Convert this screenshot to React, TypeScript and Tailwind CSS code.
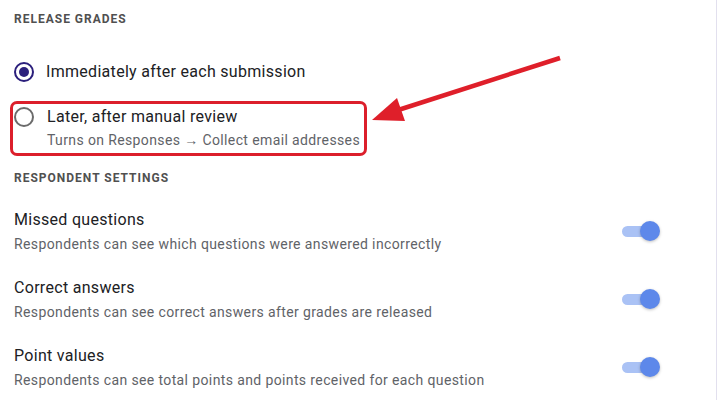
import React from 'react';

// Toggle switch (on state)
const Toggle = () => (
  <div className="relative h-[20px] w-[38px] shrink-0 blur-[0.4px]">
    <div className="absolute left-0 top-[5px] h-[11px] w-[32px] rounded-full bg-[#aac2f5]" />
    <div className="absolute right-0 top-0 h-[20px] w-[20px] rounded-full bg-[#5d88ea] shadow-[0_1px_3px_rgba(0,0,0,0.25)]" />
  </div>
);

const Radio = ({ checked }: { checked?: boolean }) =>
  checked ? (
    <div className="flex h-[20px] w-[20px] shrink-0 items-center justify-center rounded-full border-2 border-[#2b1f7c]">
      <div className="h-[10px] w-[10px] rounded-full bg-[#2b1f7c]" />
    </div>
  ) : (
    <div className="h-[20px] w-[20px] shrink-0 rounded-full border-2 border-[#6b6b6b]" />
  );

const SectionTitle = ({ children }: { children: React.ReactNode }) => (
  <h3 className="text-[12px] leading-[16px] font-bold tracking-[1px] text-[#505050]">{children}</h3>
);

const settings = [
  { title: 'Missed questions', desc: 'Respondents can see which questions were answered incorrectly' },
  { title: 'Correct answers', desc: 'Respondents can see correct answers after grades are released' },
  { title: 'Point values', desc: 'Respondents can see total points and points received for each question' },
];

export default function App() {
  return (
    <div className="relative h-[400px] w-[720px] overflow-hidden bg-white font-['Roboto',sans-serif]">
      <div className="h-full w-[717px] border-r border-[#e2e0ee] pl-[14px] pt-[11px]">
        <SectionTitle>RELEASE GRADES</SectionTitle>

        <div className="mt-[33px] flex h-[24px] items-center gap-[12px]">
          <Radio checked />
          <span className="text-[16px] leading-[24px] tracking-[0.3px] text-[#202124]">
            Immediately after each submission
          </span>
        </div>

        <div className="-ml-[4px] mt-[17px] w-[357px] rounded-[7px] border-[3px] border-[#dc1f2b] pb-[3px] pl-[1px] pt-[1px]">
          <div className="flex h-[24px] items-center gap-[13px]">
            <Radio />
            <span className="text-[16px] leading-[24px] tracking-[0.3px] text-[#202124]">Later, after manual review</span>
          </div>
          <p className="ml-[33px] mt-[1px] text-[14px] leading-[20px] tracking-[0.38px] text-[#5f6368]">
            Turns on Responses → Collect email addresses
          </p>
        </div>

        <div className="mt-[14px]">
          <SectionTitle>RESPONDENT SETTINGS</SectionTitle>
        </div>

        <div className="mt-[22px] flex flex-col gap-[22px] pr-[56px]">
          {settings.map((s) => (
            <div key={s.title} className="flex items-center justify-between">
              <div>
                <div className="text-[16px] leading-[24px] tracking-[0.3px] text-[#202124]">{s.title}</div>
                <div className="mt-[2px] text-[14px] leading-[20px] tracking-[0.38px] text-[#5f6368]">{s.desc}</div>
              </div>
              <Toggle />
            </div>
          ))}
        </div>
      </div>

      {/* annotation arrow */}
      <svg className="pointer-events-none absolute left-0 top-0" width="720" height="400">
        <line x1="560" y1="58" x2="392" y2="112" stroke="#df1f2a" strokeWidth="4.5" strokeLinecap="butt" />
        <polygon points="372,120 397,98 405,121" fill="#df1f2a" />
      </svg>
    </div>
  );
}
